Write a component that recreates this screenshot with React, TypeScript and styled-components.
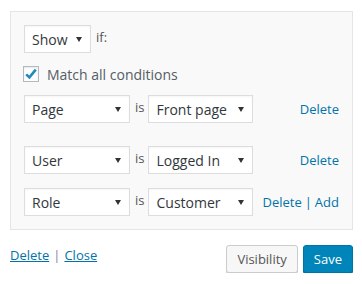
import React from "react";
import styled, { createGlobalStyle } from "styled-components";

const GlobalStyle = createGlobalStyle`
  body {
    margin: 0;
    background: #fff;
    font-family: "Open Sans", "Liberation Sans", sans-serif;
    font-size: 13px;
    color: #444;
  }
`;

const Wrap = styled.div`
  width: 343px;
  margin: 11px 0 0 10px;
`;

const Panel = styled.div`
  box-sizing: border-box;
  background: #f9f9f9;
  border: 1px solid #e5e5e5;
  padding: 13px 13px 13px 13px;
  display: flex;
  flex-direction: column;
`;

const Row = styled.div<{ $mt?: number }>`
  display: flex;
  align-items: center;
  height: 28px;
  margin-top: ${(p) => p.$mt ?? 0}px;
`;

const Select = styled.div<{ $w: number }>`
  box-sizing: border-box;
  width: ${(p) => p.$w}px;
  height: 28px;
  background: #fff;
  border: 1px solid #ddd;
  box-shadow: inset 0 1px 2px rgba(0, 0, 0, 0.04);
  display: flex;
  align-items: center;
  justify-content: space-between;
  padding: 0 8px 0 7px;
  color: #32373c;
  font-size: 14px;
  white-space: nowrap;
`;

const Caret = styled.span`
  width: 0;
  height: 0;
  border-left: 3.5px solid transparent;
  border-right: 3.5px solid transparent;
  border-top: 5px solid #333;
  margin-top: 1px;
`;

const Word = styled.span`
  color: #555;
  font-size: 13px;
  margin: 0 4px 5px 5px;
`;

const CheckRow = styled.label`
  display: flex;
  align-items: center;
  margin-top: 13px;
  height: 16px;
  color: #555d66;
  font-size: 14px;
`;

const Box = styled.span`
  box-sizing: border-box;
  width: 16px;
  height: 16px;
  border: 1px solid #b4b9be;
  background: #fff;
  box-shadow: inset 0 1px 2px rgba(0, 0, 0, 0.1);
  display: flex;
  align-items: center;
  justify-content: center;
  margin: 0 8px 0 -1px;
`;

const Actions = styled.div`
  margin-left: auto;
  display: flex;
  align-items: center;
  gap: 3px;
  color: #0073aa;
  font-size: 13px;
`;

const Link = styled.a<{ $under?: boolean }>`
  color: #0073aa;
  text-decoration: ${(p) => (p.$under ? "underline" : "none")};
  cursor: pointer;
`;

const Sep = styled.span<{ $c: string }>`
  color: ${(p) => p.$c};
`;

const Footer = styled.div`
  display: flex;
  align-items: flex-start;
  margin-top: 15px;
`;

const FootLinks = styled.div`
  display: flex;
  gap: 4px;
  font-size: 13px;
  margin-top: 1px;
`;

const Buttons = styled.div`
  margin-left: auto;
  display: flex;
  gap: 5px;
`;

const Button = styled.button<{ $primary?: boolean }>`
  box-sizing: border-box;
  height: 28px;
  padding: 0 10px 1px;
  font-family: inherit;
  font-size: 13px;
  border-radius: 3px;
  border: 1px solid ${(p) => (p.$primary ? "#0073aa" : "#ccc")};
  background: ${(p) => (p.$primary ? "#0085ba" : "#f7f7f7")};
  color: ${(p) => (p.$primary ? "#fff" : "#555")};
  box-shadow: 0 1px 0 ${(p) => (p.$primary ? "#006799" : "#ccc")};
`;

const Sel = ({ w, label }: { w: number; label: string }) => (
  <Select $w={w}>
    <span>{label}</span>
    <Caret />
  </Select>
);

const rules = [
  { field: "Page", value: "Front page", mt: 13, add: false },
  { field: "User", value: "Logged In", mt: 23, add: false },
  { field: "Role", value: "Customer", mt: 14, add: true },
];

function App() {
  return (
    <>
      <GlobalStyle />
      <Wrap>
        <Panel>
          <Row>
            <Sel w={67} label="Show" />
            <Word style={{ marginBottom: 4 }}>if:</Word>
          </Row>
          <CheckRow>
            <Box>
              <svg width="14" height="14" viewBox="0 0 14 14">
                <path d="M2.2 7.4 L5.4 10.4 L11.8 2.6" fill="none" stroke="#1e8cbe" strokeWidth="2.6" />
              </svg>
            </Box>
            Match all conditions
          </CheckRow>
          {rules.map((r) => (
            <Row key={r.field} $mt={r.mt}>
              <Sel w={106} label={r.field} />
              <Word>is</Word>
              <Sel w={105} label={r.value} />
              <Actions>
                <Link>Delete</Link>
                {r.add && (
                  <>
                    <Sep $c="#0073aa">|</Sep>
                    <Link>Add</Link>
                  </>
                )}
              </Actions>
            </Row>
          ))}
        </Panel>
        <Footer>
          <FootLinks>
            <Link $under>Delete</Link>
            <Sep $c="#8a7bb5">|</Sep>
            <Link $under>Close</Link>
          </FootLinks>
          <Buttons>
            <Button>Visibility</Button>
            <Button $primary>Save</Button>
          </Buttons>
        </Footer>
      </Wrap>
    </>
  );
}

export default App;
